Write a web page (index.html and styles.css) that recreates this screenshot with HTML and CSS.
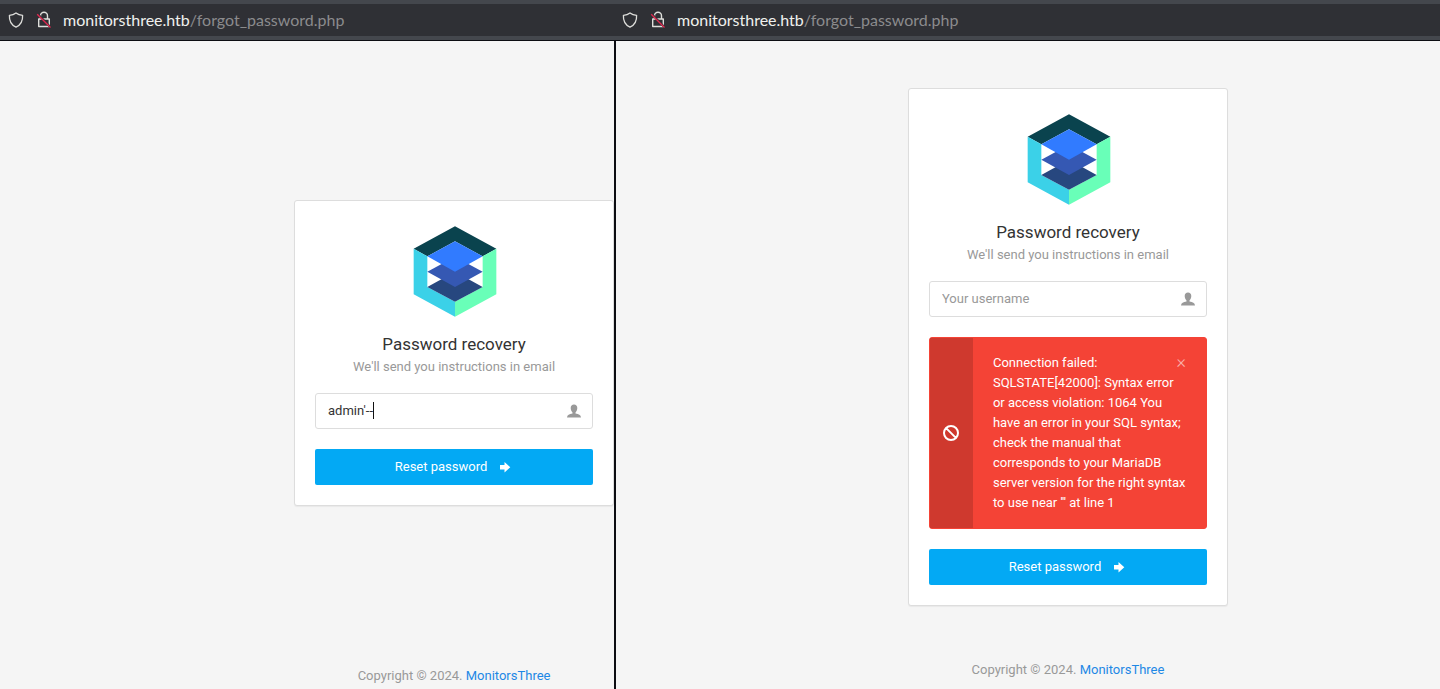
FILE: index.html
```html
<!DOCTYPE html>
<html lang="en">
<head>
<meta charset="utf-8">
<title>Password recovery</title>
<link rel="stylesheet" href="styles.css">
</head>
<body>
<svg width="0" height="0" class="defs" aria-hidden="true">
  <symbol id="shield" viewBox="0 0 16 16"><path d="M8 .9C9.8 2.4 12 3.200 14.600 3.300C14.900 8.600 12.800 13 8 15.200C3.200 13 1.100 8.600 1.400 3.300C4 3.200 6.200 2.400 8 .9Z" fill="none" stroke="#dededb" stroke-width="1.300" stroke-linejoin="round"/></symbol>
  <symbol id="lock" viewBox="0 0 16 18"><path d="M4.500 8V4.800a3.500 3.500 0 0 1 7 0V8M2.700 8h10.600v7.500H2.700Z" fill="none" stroke="#dededb" stroke-width="1.400" stroke-linejoin="round"/><path d="M2 3.200 15 16.800" stroke="#2f3035" stroke-width="2"/><path d="M1.200 3.200 14.500 16.500" stroke="#e22850" stroke-width="1.300"/></symbol>
  <symbol id="logo" viewBox="9 18 306 306">
    <path d="M165 34 289 101 248 124 165 79 82 124 41 101Z" fill="#0a434e"/>
    <path d="M41 101 82 124V216L165 260V305L41 238Z" fill="#3bd1e8"/>
    <path d="M289 101 248 124V216L165 260V305L289 238Z" fill="#69ffb8"/>
    <path d="M165 170 248 216 165 260 82 216Z" fill="#27477f"/>
    <path d="M165 125 248 170 165 216 82 170Z" fill="#3558b3"/>
    <path d="M165 79 248 124 165 170 82 124Z" fill="#317bff"/>
  </symbol>
  <symbol id="user" viewBox="0 0 16 16"><path d="M8 1.600c2 0 3.300 1.400 3.300 3.500 0 1.900-.7 3.400-1.800 4.300v1.200c3.200.3 5.300 1.500 5.500 4H1c.2-2.500 2.300-3.700 5.500-4V9.400C5.400 8.500 4.700 7 4.700 5.100 4.700 3 6 1.600 8 1.600Z" fill="#999"/></symbol>
  <symbol id="arrow" viewBox="0 0 16 16"><path d="M3 6h4.500V3L13.300 8.200 7.500 13.400V10.500H3Z" fill="#fff"/></symbol>
  <symbol id="blocked" viewBox="0 0 16 16"><path d="M8 1a7 7 0 1 0 0 14A7 7 0 0 0 8 1ZM3.100 3.100 12.900 12.900" fill="none" stroke="#fff" stroke-width="2"/></symbol>
</svg>
<div class="panes">
  <section class="pane">
    <header class="urlbar">
      <svg class="shield"><use href="#shield"/></svg>
      <svg class="lock"><use href="#lock"/></svg>
      <span class="url"><b class="host">monitorsthree.htb</b>/forgot_password.php</span>
    </header>
    <div class="viewport">
      <div class="page page-first">
        <main class="main">
          <form class="card">
            <div class="heading">
              <svg class="logo"><use href="#logo"/></svg>
              <h5 class="title">Password recovery</h5>
              <small class="subtitle">We'll send you instructions in email</small>
            </div>
            <div class="field">
              <input class="input" type="text" aria-label="Your username" placeholder="Your username" value="admin'--">
              <span class="caret"></span>
              <svg class="user"><use href="#user"/></svg>
            </div>
            <button class="submit" type="button">Reset password<svg class="arrow"><use href="#arrow"/></svg></button>
          </form>
        </main>
        <footer class="footer">Copyright © 2024. <a class="link" href="#">MonitorsThree</a></footer>
      </div>
    </div>
  </section>
  <section class="pane">
    <header class="urlbar">
      <svg class="shield"><use href="#shield"/></svg>
      <svg class="lock"><use href="#lock"/></svg>
      <span class="url"><b class="host">monitorsthree.htb</b>/forgot_password.php</span>
    </header>
    <div class="viewport viewport-divided">
      <div class="page page-second">
        <main class="main">
          <form class="card">
            <div class="heading">
              <svg class="logo"><use href="#logo"/></svg>
              <h5 class="title">Password recovery</h5>
              <small class="subtitle">We'll send you instructions in email</small>
            </div>
            <div class="field">
              <input class="input" type="text" aria-label="Your username" placeholder="Your username">
              <svg class="user"><use href="#user"/></svg>
            </div>
            <div class="alert" role="alert">
              <div class="alert-icon"><svg class="blocked"><use href="#blocked"/></svg></div>
              <div class="alert-text"><button class="close" type="button" aria-label="Close">×</button>Connection failed: SQLSTATE[42000]: Syntax error or access violation: 1064 You have an error in your SQL syntax; check the manual that corresponds to your MariaDB server version for the right syntax to use near ''' at line 1</div>
            </div>
            <button class="submit" type="button">Reset password<svg class="arrow"><use href="#arrow"/></svg></button>
          </form>
        </main>
        <footer class="footer">Copyright © 2024. <a class="link" href="#">MonitorsThree</a></footer>
      </div>
    </div>
  </section>
</div>
</body>
</html>
```
FILE: styles.css
```css
* { box-sizing: border-box; }
body {
  margin: 0;
  font: 13px/20px Roboto, sans-serif;
  color: #333;
  background: #f5f5f5;
}
.defs { position: absolute; }
svg { display: block; flex: none; }
.panes {
  display: grid;
  grid-template-columns: 614fr 826fr;
  min-height: 100vh;
}
.pane {
  display: flex;
  flex-direction: column;
  min-width: 0;
  overflow: hidden;
}
.urlbar {
  display: flex;
  align-items: center;
  height: 41px;
  padding-left: 8px;
  padding-bottom: 4px;
  background: #2f3035;
  border-top: 4px solid #44474d;
  border-bottom: 1px solid #0c0d12;
  box-shadow: inset 0 -4px #44474d;
}
.shield { width: 16px; height: 16px; }
.lock { width: 16px; height: 18px; margin-left: 12px; }
.url {
  margin-left: 11px;
  font: 16px/24px Lato, "Noto Sans", sans-serif;
  color: #8b8b8d;
  white-space: nowrap;
}
.host { font-weight: 400; color: #f0f0ee; }
.viewport { flex: 1; display: flex; }
.viewport-divided { border-left: 2px solid #0c0d12; }
.page {
  flex: none;
  display: flex;
  flex-direction: column;
}
.page-first { width: 147.9%; padding-bottom: 3px; }
.page-second { width: 109.7%; padding-bottom: 9px; }
.main {
  flex: 1;
  display: flex;
  align-items: center;
  justify-content: center;
}
.page-first .main { padding-bottom: 1px; }
.page-second .main { padding-bottom: 7px; }
.card {
  display: flex;
  flex-direction: column;
  gap: 20px;
  width: 320px;
  padding: 20px;
  background: #fff;
  border: 1px solid #ddd;
  border-radius: 3px;
  box-shadow: 0 1px 1px rgba(0, 0, 0, .05);
}
.heading {
  display: flex;
  flex-direction: column;
  align-items: center;
  margin-bottom: -4px;
}
.logo { width: 102px; height: 102px; }
.title {
  margin: 10px 0 2px;
  font-size: 17px;
  line-height: 22px;
  font-weight: 400;
}
.subtitle { font-size: 13px; color: #999; }
.field { position: relative; }
.input {
  display: block;
  width: 100%;
  height: 36px;
  padding: 6px 36px 8px 12px;
  font: inherit;
  color: #333;
  background: #fff;
  border: 1px solid #ddd;
  border-radius: 3px;
  outline: 0;
}
.input::placeholder { color: #999; opacity: 1; }
.caret {
  position: absolute;
  left: 58px;
  top: 9px;
  width: 1px;
  height: 17px;
  background: #111;
}
.user {
  position: absolute;
  right: 11px;
  top: 10px;
  width: 16px;
  height: 16px;
}
.submit {
  display: flex;
  align-items: center;
  justify-content: center;
  gap: 10px;
  height: 36px;
  padding: 0;
  font: inherit;
  color: #fff;
  background: #03a9f4;
  border: 0;
  border-radius: 2px;
}
.arrow { width: 16px; height: 16px; }
.alert {
  display: flex;
  color: #fff;
  background: #f44336;
  border: 1px solid #f44336;
  border-radius: 3px;
}
.alert-icon {
  display: flex;
  align-items: center;
  justify-content: center;
  width: 43px;
  flex: none;
  background: #cf392e;
}
.blocked { width: 16px; height: 16px; }
.alert-text { flex: 1; padding: 15px 20px; }
.close {
  float: right;
  padding: 0;
  font: 300 18px/18px Roboto, sans-serif;
  color: #fff;
  background: none;
  border: 0;
  opacity: .6;
}
.footer { text-align: center; color: #999; }
.link { color: #1e88e5; text-decoration: none; }
```
